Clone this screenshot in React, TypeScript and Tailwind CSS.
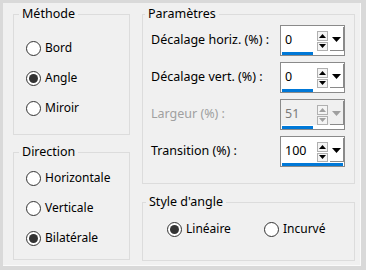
import React from "react";

const font = { fontFamily: '"Noto Sans", "Open Sans", sans-serif' };

function Radio({ label, checked, className }: { label: string; checked?: boolean; className?: string }) {
  return (
    <div className={"flex items-center h-[30px] " + (className ?? "")}>
      <span className="w-[15px] h-[15px] rounded-full border border-[#333333] bg-white flex items-center justify-center shrink-0">
        {checked && <span className="w-[9px] h-[9px] rounded-full bg-[#333333]" />}
      </span>
      <span className="ml-[4px] text-[12px] leading-[16px] text-black">{label}</span>
    </div>
  );
}

function Group({
  title,
  className,
  legendClass,
  children,
}: {
  title: string;
  className?: string;
  legendClass?: string;
  children: React.ReactNode;
}) {
  return (
    <fieldset className={"border border-[#dcdcdc] " + (className ?? "")}>
      <legend className={"px-[3px] text-[12.5px] leading-[16px] text-black " + (legendClass ?? "ml-[5px]")}>
        {title}
      </legend>
      {children}
    </fieldset>
  );
}

function Spin({ value, pct, disabled }: { value: string; pct: number; disabled?: boolean }) {
  const arrow = disabled ? "#a0a0a0" : "#000000";
  return (
    <div className="w-[65px] h-[31px] border border-[#8a8a8a] bg-white flex flex-col">
      <div className={"flex h-[25px] " + (disabled ? "bg-[#f0f0f0]" : "bg-white")}>
        <div
          className={
            "flex-1 pl-[4px] pt-[6px] text-[12.5px] leading-[16px] " +
            (disabled ? "text-[#7a7a7a]" : "text-black")
          }
        >
          {value}
        </div>
        <div className="flex flex-col gap-[1px] pt-[5px] w-[11px]">
          <div className="h-[10px] border border-[#b0b0b0] bg-[#f4f4f4] flex items-center justify-center">
            <svg width="7" height="4" viewBox="0 0 7 4">
              <polygon points="0,4 7,4 3.5,0" fill={arrow} />
            </svg>
          </div>
          <div className="h-[10px] border border-[#b0b0b0] bg-[#f4f4f4] flex items-center justify-center">
            <svg width="7" height="4" viewBox="0 0 7 4">
              <polygon points="0,0 7,0 3.5,4" fill={arrow} />
            </svg>
          </div>
        </div>
        <div className="ml-[2px] w-[14px] mt-[1px] border-r border-b border-[#8a8a8a] flex justify-center pt-[10px]">
          <svg width="9" height="5" viewBox="0 0 9 5">
            <polygon points="0,0 9,0 4.5,5" fill={arrow} />
          </svg>
        </div>
      </div>
      <div className="flex-1 px-[1px] pt-[1px]">
        <div className="h-[3px] bg-[#0078d7]" style={{ width: `${pct}%` }} />
      </div>
    </div>
  );
}

function Row({ label, value, pct, disabled }: { label: string; value: string; pct: number; disabled?: boolean }) {
  return (
    <div className="flex items-center justify-between h-[31px]">
      <span className={"text-[12.5px] leading-[16px] pb-[2px] " + (disabled ? "text-[#a0a0a0]" : "text-black")}>
        {label}
      </span>
      <Spin value={value} pct={pct} disabled={disabled} />
    </div>
  );
}

export default function App() {
  return (
    <div className="w-[366px] h-[270px] bg-[#d9d9d9] pt-[3px] pl-[3px] pr-[5px] pb-[4px]" style={font}>
      <div className="h-full bg-[#f0f0f0] border-r border-b border-[#fafafa] pl-[10px] pr-[3px] flex gap-[12px]">
        <div className="w-[117px] flex flex-col">
          <Group title="Méthode" className="mt-[3px] h-[129px]">
            <div className="pl-[12px] pt-[11px]">
              <Radio label="Bord" />
              <Radio label="Angle" checked />
              <Radio label="Miroir" />
            </div>
          </Group>
          <Group title="Direction" className="mt-[9px] h-[116px]">
            <div className="pl-[12px] pt-[3px]">
              <Radio label="Horizontale" />
              <Radio label="Verticale" />
              <Radio label="Bilatérale" checked />
            </div>
          </Group>
        </div>
        <div className="w-[213px] flex flex-col">
          <Group title="Paramètres" className="mt-[3px] h-[178px]" legendClass="ml-[2px]">
            <div className="flex flex-col gap-[6px] pl-[8px] pr-[9px] pt-[3px]">
              <Row label="Décalage horiz. (%) :" value="0" pct={50} />
              <Row label="Décalage vert. (%) :" value="0" pct={50} />
              <Row label="Largeur (%) :" value="51" pct={51} disabled />
              <Row label="Transition (%) :" value="100" pct={100} />
            </div>
          </Group>
          <Group title="Style d'angle" className="mt-[10px] h-[67px]" legendClass="ml-[3px]">
            <div className="flex pl-[24px] pt-[4px]">
              <Radio label="Linéaire" checked className="w-[97px]" />
              <Radio label="Incurvé" />
            </div>
          </Group>
        </div>
      </div>
    </div>
  );
}
